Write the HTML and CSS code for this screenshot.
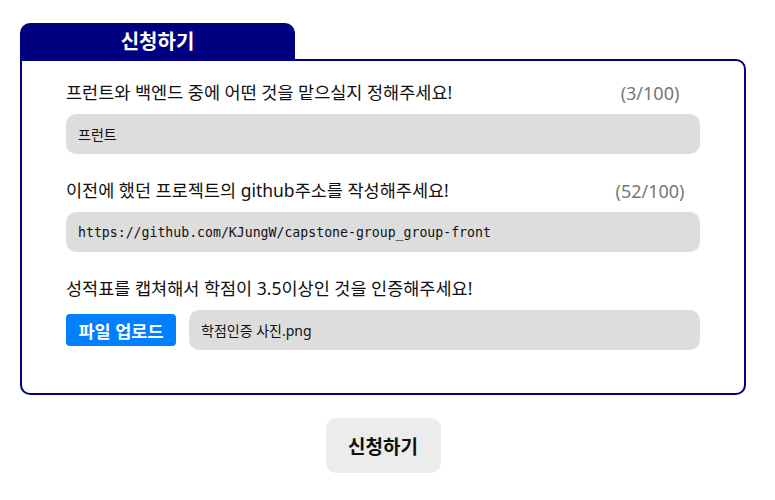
FILE: index.html
```html
<!DOCTYPE html>
<html lang="ko">
<head>
<meta charset="utf-8">
<link rel="stylesheet" href="styles.css">
</head>
<body>
<div class="page">
  <div class="tab">신청하기</div>
  <div class="box">
    <div class="field">
      <div class="label-row">
        <span class="label">프런트와 백엔드 중에 어떤 것을 맡으실지 정해주세요!</span>
        <span class="count">(3/100)</span>
      </div>
      <div class="input">프런트</div>
    </div>
    <div class="field">
      <div class="label-row">
        <span class="label">이전에 했던 프로젝트의 github주소를 작성해주세요!</span>
        <span class="count">(52/100)</span>
      </div>
      <div class="input mono">https://github.com/KJungW/capstone-group_group-front</div>
    </div>
    <div class="field">
      <div class="label-row">
        <span class="label">성적표를 캡쳐해서 학점이 3.5이상인 것을 인증해주세요!</span>
      </div>
      <div class="file-row">
        <span class="upload">파일 업로드</span>
        <div class="input file">학점인증 사진.png</div>
      </div>
    </div>
  </div>
  <div class="actions">
    <span class="submit">신청하기</span>
  </div>
</div>
</body>
</html>
```

FILE: styles.css
```css
html, body {
  margin: 0;
  padding: 0;
  background: #fff;
}
body {
  font-family: "Noto Sans", "Noto Sans CJK KR", sans-serif;
  color: #111;
}
.page {
  padding: 23px 29px 0 20px;
}
.tab {
  width: 275px;
  height: 37px;
  background: #000080;
  color: #fff;
  border-radius: 10px 10px 0 0;
  font-size: 20px;
  font-weight: 700;
  line-height: 37px;
  text-align: center;
}
.box {
  border: 2px solid #000080;
  border-radius: 0 10px 10px 10px;
  padding: 19px 44px 43px 44px;
  display: flex;
  flex-direction: column;
  gap: 24px;
  margin-top: -1px;
}
.field {
  display: flex;
  flex-direction: column;
  gap: 9px;
}
.label-row {
  display: flex;
  align-items: center;
  height: 25px;
}
.label {
  flex: 1;
  font-size: 17.5px;
  line-height: 25px;
}
.count {
  width: 100px;
  text-align: center;
  font-size: 18px;
  color: #777;
}
.input {
  height: 40px;
  background: #dddddd;
  border-radius: 10px;
  padding: 0 12px;
  display: flex;
  align-items: center;
  font-size: 14px;
}
.mono {
  font-family: "DejaVu Sans Mono", "Liberation Mono", monospace;
  font-size: 13.2px;
}
.file-row {
  display: flex;
  align-items: center;
  gap: 13px;
}
.upload {
  width: 110px;
  height: 32px;
  background: #0080ff;
  color: #fff;
  border-radius: 4px;
  font-size: 17.5px;
  font-weight: 700;
  display: flex;
  align-items: center;
  justify-content: center;
}
.file {
  flex: 1;
}
.actions {
  display: flex;
  justify-content: center;
  margin-top: 23px;
}
.submit {
  width: 115px;
  height: 55px;
  background: #ececec;
  border-radius: 10px;
  font-size: 19px;
  font-weight: 700;
  display: flex;
  align-items: center;
  justify-content: center;
}
```
